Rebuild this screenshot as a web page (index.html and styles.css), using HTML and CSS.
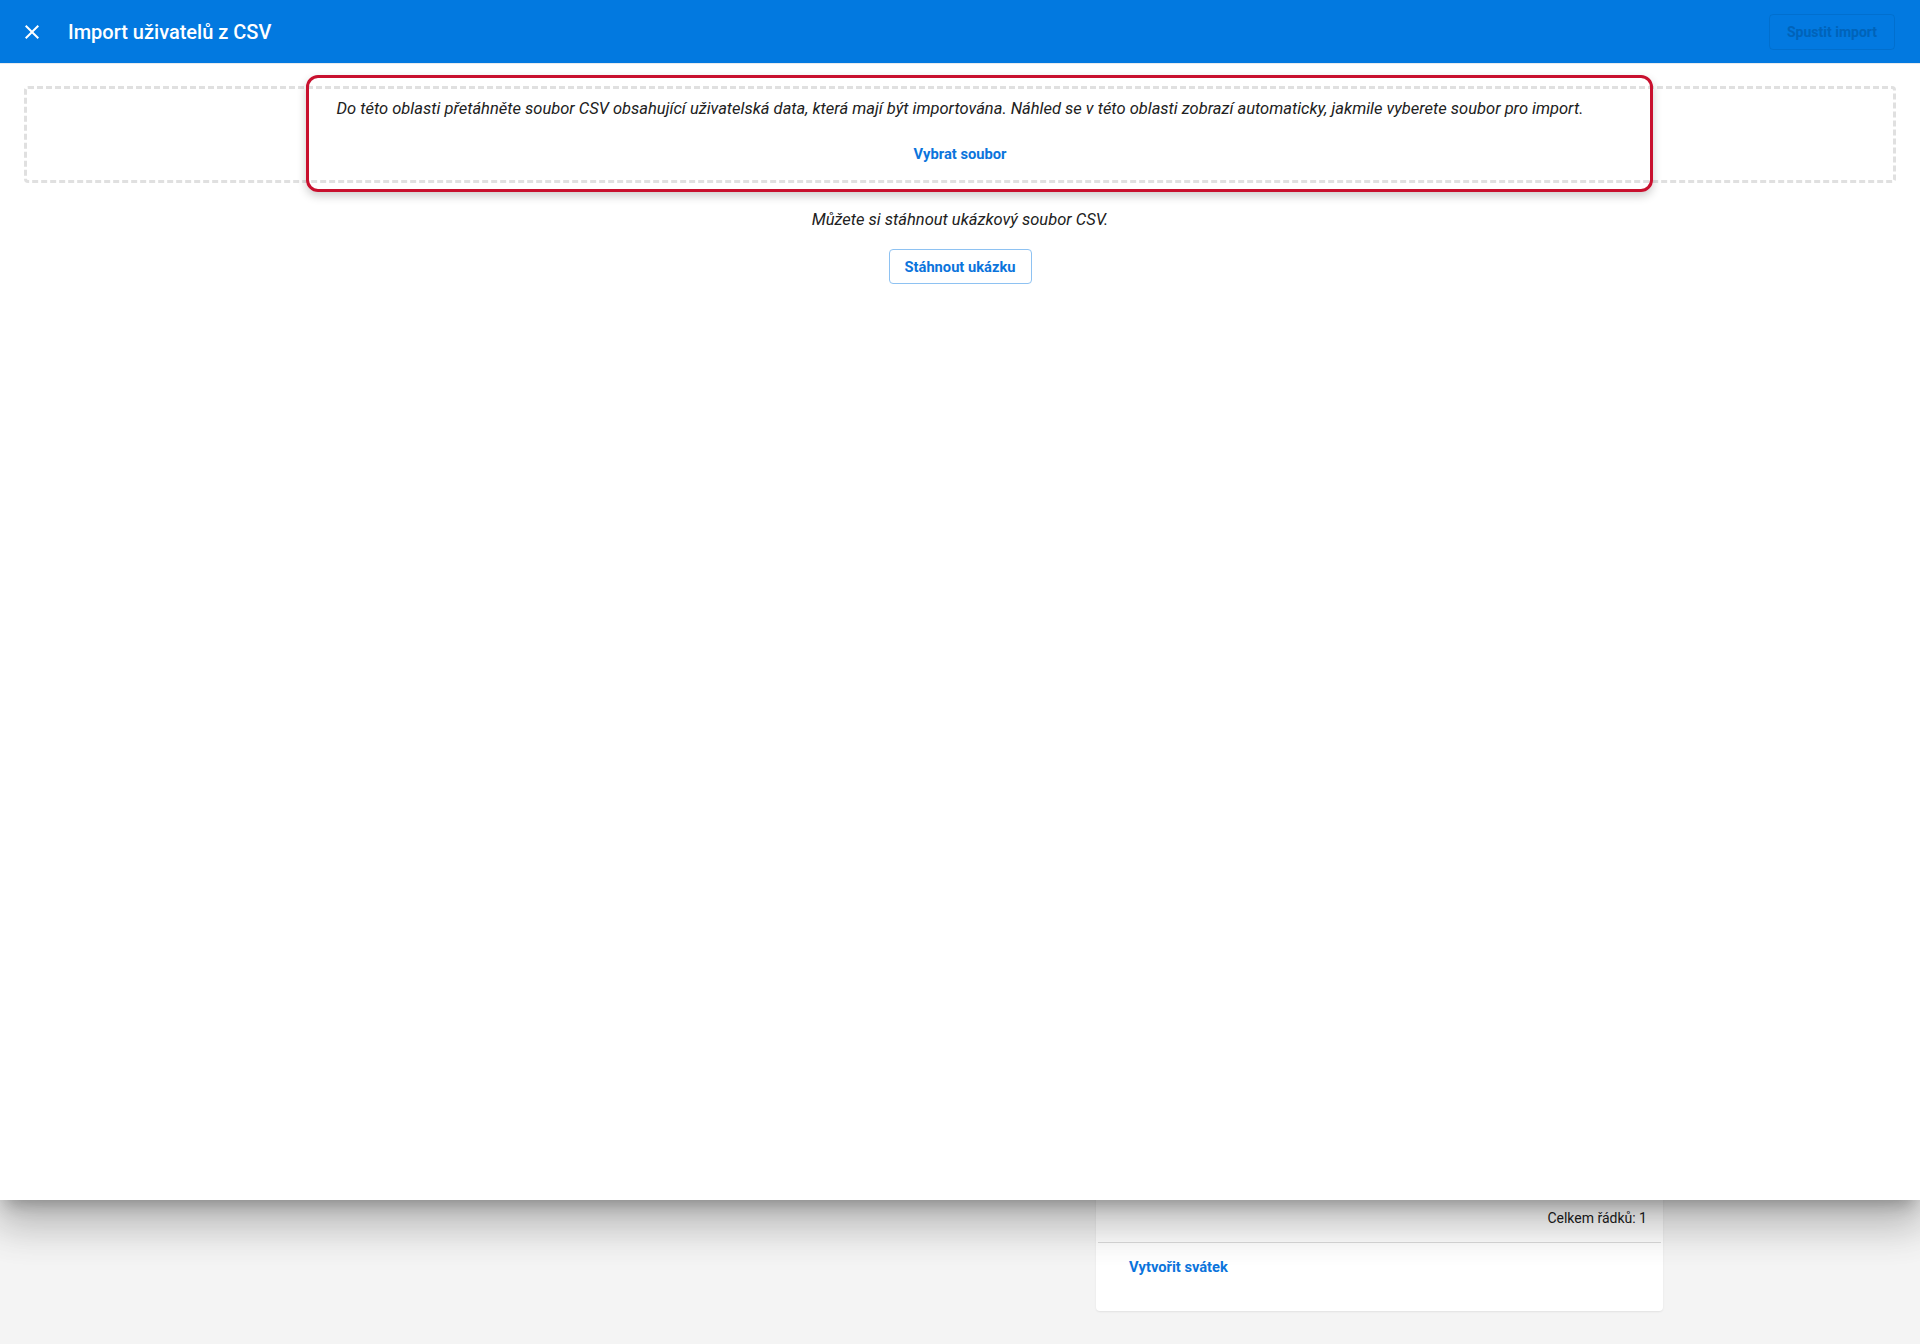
FILE: index.html
```html
<!DOCTYPE html>
<html lang="cs">
<head>
  <meta charset="UTF-8">
  <title>Import uživatelů z CSV</title>
  <link rel="stylesheet" href="styles.css">
</head>
<body>

  <div class="page">
    <div class="holiday-card">
      <div class="card-summary">Celkem řádků: 1</div>
      <div class="card-actions">
        <a class="text-link" href="#">Vytvořit svátek</a>
      </div>
    </div>
  </div>

  <div class="dialog">
    <header class="dialog-bar">
      <button class="icon-btn" aria-label="Zavřít">
        <svg width="24" height="24" viewBox="0 0 24 24">
          <path d="M19 6.41L17.59 5 12 10.59 6.41 5 5 6.41 10.59 12 5 17.59 6.41 19 12 13.41 17.59 19 19 17.59 13.41 12z" fill="#fff"/>
        </svg>
      </button>
      <h1>Import uživatelů z CSV</h1>
      <button class="run-btn" disabled>Spustit import</button>
    </header>

    <div class="dialog-body">
      <div class="dropzone">
        <p class="hint">Do této oblasti přetáhněte soubor CSV obsahující uživatelská data, která mají být importována. Náhled se v této oblasti zobrazí automaticky, jakmile vyberete soubor pro import.</p>
        <a class="text-link" href="#">Vybrat soubor</a>
        <div class="highlight"></div>
      </div>

      <p class="hint sample">Můžete si stáhnout ukázkový soubor CSV.</p>
      <button class="outline-btn">Stáhnout ukázku</button>
    </div>
  </div>

</body>
</html>
```

FILE: styles.css
```css
* {
  box-sizing: border-box;
  font-family: 'Roboto', 'Liberation Sans', sans-serif;
}

body {
  margin: 0;
  height: 1344px;
  overflow: hidden;
  background-color: #f4f4f4;
  position: relative;
}

/* page behind the dialog */
.page {
  padding: 1150px 257px 0 0;
  display: flex;
  justify-content: flex-end;
}

.holiday-card {
  width: 567px;
  background-color: #fff;
  border-radius: 4px;
  box-shadow: 0 1px 2px rgba(0, 0, 0, 0.08);
  padding: 0 2px;
}

.card-summary {
  height: 93px;
  padding: 60px 14px 0 0;
  text-align: right;
  font-size: 14px;
  color: #212121;
  border-bottom: 1px solid #dcdcdc;
}

.card-actions {
  padding: 12px 31px 32px;
}

.text-link {
  font-size: 14.7px;
  font-weight: 700;
  color: #0b74dc;
  text-decoration: none;
  line-height: 24px;
}

/* dialog */
.dialog {
  position: absolute;
  top: 0;
  left: 0;
  width: 1920px;
  height: 1200px;
  background-color: #fff;
  box-shadow: 0 11px 15px -7px rgba(0, 0, 0, 0.25), 0 24px 38px 3px rgba(0, 0, 0, 0.16), 0 9px 46px 8px rgba(0, 0, 0, 0.14);
}

.dialog-bar {
  height: 64px;
  background-color: #0279e0;
  border-bottom: 1px solid #e6eaee;
  display: flex;
  align-items: center;
  padding: 0 24px 0 20px;
}

.icon-btn {
  width: 24px;
  height: 24px;
  padding: 0;
  border: none;
  background: none;
  display: flex;
}

.dialog-bar h1 {
  margin: 0 0 0 24px;
  font-size: 20px;
  font-weight: 500;
  color: #fff;
  flex: 1;
}

.run-btn {
  height: 36px;
  padding: 0 17px;
  margin-right: 1px;
  border: 1px solid rgba(0, 0, 0, 0.08);
  border-radius: 4px;
  background: none;
  font-size: 14px;
  font-weight: 700;
  color: #0063b9;
}

.dialog-body {
  padding: 22px 24px 0;
  display: flex;
  flex-direction: column;
  align-items: center;
}

.dropzone {
  position: relative;
  width: 100%;
  height: 97px;
  border: 3px dashed #e0e0e0;
  border-radius: 4px;
  padding: 9px 16px 0;
  display: flex;
  flex-direction: column;
  align-items: center;
}

.hint {
  margin: 0;
  font-size: 16.5px;
  font-style: italic;
  line-height: 22px;
  color: #212121;
  text-align: center;
}

.dropzone .text-link {
  margin-top: 22px;
}

.highlight {
  position: absolute;
  left: 279px;
  top: -14px;
  width: 1347px;
  height: 117px;
  border: 3px solid #c8102e;
  border-radius: 12px;
  box-shadow: 0 4px 10px rgba(0, 0, 0, 0.2);
}

.sample {
  margin-top: 26px;
}

.outline-btn {
  margin-top: 18px;
  height: 35px;
  width: 143px;
  border: 1px solid #8ec2f2;
  border-radius: 4px;
  background-color: #fff;
  font-size: 14.7px;
  font-weight: 700;
  color: #0b74dc;
}
```
